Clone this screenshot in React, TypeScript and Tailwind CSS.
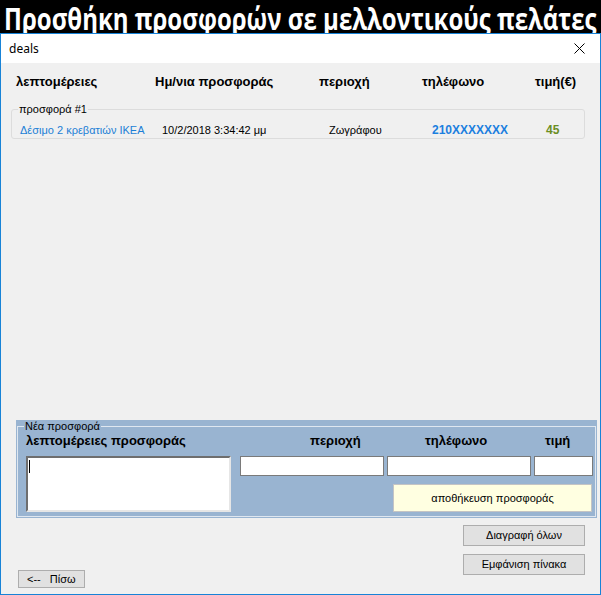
import React from "react";

const ms = { fontFamily: '"Liberation Sans", Arial, sans-serif' };

export default function App() {
  return (
    <div className="w-[601px] h-[595px] bg-black flex flex-col overflow-hidden" style={ms}>
      <div className="h-[33px] shrink-0 flex justify-center relative z-0">
        <span
          className="shrink-0 text-white font-bold text-[30px] leading-none mt-[4px] whitespace-nowrap scale-x-[0.8]"
          style={{ fontFamily: '"Open Sans", sans-serif' }}
        >
          Προσθήκη προσφορών σε μελλοντικούς πελάτες
        </span>
      </div>
      <div className="relative z-10 flex-1 flex flex-col border border-[#1883d7] bg-[#f0f0f0]">
        <div className="h-[29px] shrink-0 bg-white flex items-center justify-between pl-[8px] pr-[15px]">
          <span className="text-[12px] text-black" style={{ fontFamily: '"Noto Sans", sans-serif' }}>
            deals
          </span>
          <svg width="11" height="11" viewBox="0 0 11 11">
            <path d="M0.5 0.5 L10.5 10.5 M10.5 0.5 L0.5 10.5" stroke="#000" strokeWidth="1" />
          </svg>
        </div>
        <div className="flex-1 flex flex-col">
          <div className="flex pl-[15px] pt-[11px] text-[13px] leading-[16px] font-bold text-black">
            <span className="w-[139px]">λεπτομέρειες</span>
            <span className="w-[164px]">Ημ/νια προσφοράς</span>
            <span className="w-[103px]">περιοχή</span>
            <span className="w-[113px]">τηλέφωνο</span>
            <span>τιμή(€)</span>
          </div>
          <fieldset className="ml-[10px] w-[574px] mt-[12px] border border-[#dcdcdc] rounded-[3px]">
            <legend className="ml-[6px] px-[1px] text-[11px] leading-[14px] text-black">προσφορά #1</legend>
            <div className="flex pl-[8px] pt-[7px] pb-[1px] text-[11px] leading-[14px] items-center">
              <span className="w-[142px] text-[#1c7fd6]">Δέσιμο 2 κρεβατιών IKEA</span>
              <span className="w-[167px] text-black">10/2/2018 3:34:42 μμ</span>
              <span className="w-[103px] text-black">Ζωγράφου</span>
              <span className="w-[114px] text-[#1c7fdf] font-bold text-[12px]">210XXXXXXX</span>
              <span className="text-[#6b8e23] font-bold text-[12px]">45</span>
            </div>
          </fieldset>
          <div className="flex-1" />
          <div className="ml-[15px] w-[581px] h-[98px] bg-[#99b4d1] flex flex-col">
            <fieldset className="mx-[1px] mb-[1px] flex-1 border border-[#dfe7f0]">
              <legend className="ml-[6px] px-[1px] text-[11px] leading-[12px] text-black">Νέα προσφορά</legend>
              <div className="flex pl-[8px] pt-[1px] text-[13px] leading-[16px] font-bold text-black">
                <span className="w-[284px]">λεπτομέρειες προσφοράς</span>
                <span className="w-[115px]">περιοχή</span>
                <span className="w-[120px]">τηλέφωνο</span>
                <span>τιμή</span>
              </div>
              <div className="flex pl-[8px] mt-[7px]">
                <div className="w-[205px] h-[56px] bg-white border-2 border-t-[#6e6e6e] border-l-[#6e6e6e] border-r-[#e6e6e6] border-b-[#e6e6e6] pl-[1px] pt-[2px]">
                  <div className="w-[1px] h-[13px] bg-black" />
                </div>
                <div className="flex flex-col ml-[9px]">
                  <div className="flex gap-[3px]">
                    <div className="w-[144px] h-[20px] bg-white border border-[#7a7a7a]" />
                    <div className="w-[144px] h-[20px] bg-white border border-[#7a7a7a]" />
                    <div className="w-[59px] h-[20px] bg-white border border-[#7a7a7a]" />
                  </div>
                  <button className="ml-[153px] mt-[8px] w-[199px] h-[28px] bg-[#ffffe1] border border-[#c4c4c4] text-[11px] text-black">
                    αποθήκευση προσφοράς
                  </button>
                </div>
              </div>
            </fieldset>
          </div>
          <div className="h-[76px] flex justify-between pl-[17px] pr-[15px] pt-[7px] pb-[6px]">
            <button className="self-end w-[67px] h-[18px] bg-[#e1e1e1] border border-[#adadad] text-[11px] text-black flex items-center pl-[8px] gap-[9px]">
              <span>&lt;--</span>
              <span>Πίσω</span>
            </button>
            <div className="flex flex-col gap-[8px]">
              <button className="w-[122px] h-[21px] bg-[#e1e1e1] border border-[#adadad] text-[11px] text-black">
                Διαγραφή όλων
              </button>
              <button className="w-[122px] h-[21px] bg-[#e1e1e1] border border-[#adadad] text-[11px] text-black">
                Εμφάνιση πίνακα
              </button>
            </div>
          </div>
        </div>
      </div>
    </div>
  );
}
